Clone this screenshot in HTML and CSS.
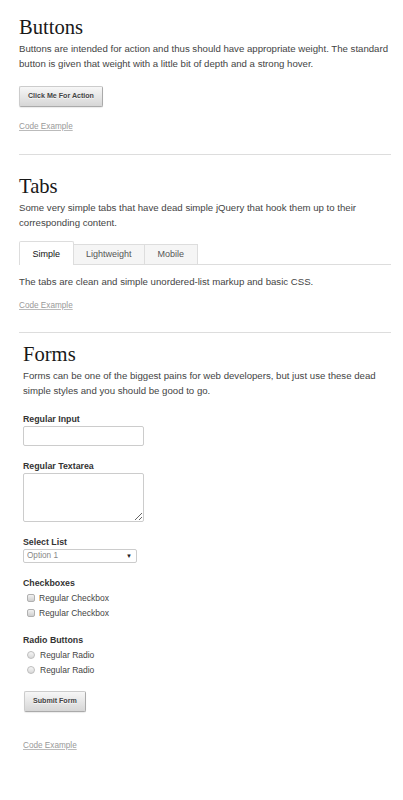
FILE: index.html
```html
<!DOCTYPE html>
<html lang="en">
<head>
<meta charset="utf-8">
<title>Skeleton Docs</title>
<link rel="stylesheet" href="styles.css">
</head>
<body>
<section class="section section-buttons">
  <h2 class="title">Buttons</h2>
  <p class="lead">Buttons are intended for action and thus should have appropriate weight. The standard button is given that weight with a little bit of depth and a strong hover.</p>
  <button class="btn btn-action" type="button">Click Me For Action</button>
  <a class="code-link code-buttons" href="#">Code Example</a>
</section>
<hr class="rule rule-first">
<section class="section section-tabs">
  <h2 class="title">Tabs</h2>
  <p class="lead">Some very simple tabs that have dead simple jQuery that hook them up to their corresponding content.</p>
  <nav class="tabs">
    <a class="tab active" href="#">Simple</a>
    <a class="tab" href="#">Lightweight</a>
    <a class="tab" href="#">Mobile</a>
  </nav>
  <p class="lead tab-content">The tabs are clean and simple unordered-list markup and basic CSS.</p>
  <a class="code-link code-tabs" href="#">Code Example</a>
</section>
<hr class="rule rule-second">
<section class="section section-forms">
  <h2 class="title">Forms</h2>
  <p class="lead">Forms can be one of the biggest pains for web developers, but just use these dead simple styles and you should be good to go.</p>
  <form class="form">
    <div class="field">
      <label class="lbl">Regular Input</label>
      <input class="text-input" type="text">
    </div>
    <div class="field">
      <label class="lbl">Regular Textarea</label>
      <textarea class="text-area"></textarea>
    </div>
    <div class="field">
      <label class="lbl">Select List</label>
      <div class="select">
        <select class="select-box"><option>Option 1</option><option>Option 2</option></select>
      </div>
    </div>
    <div class="field">
      <span class="lbl">Checkboxes</span>
      <label class="check-row"><input class="cb" type="checkbox"><span>Regular Checkbox</span></label>
      <label class="check-row"><input class="cb" type="checkbox"><span>Regular Checkbox</span></label>
    </div>
    <div class="field">
      <span class="lbl">Radio Buttons</span>
      <label class="check-row"><input class="rb" type="radio" name="r"><span>Regular Radio</span></label>
      <label class="check-row"><input class="rb" type="radio" name="r"><span>Regular Radio</span></label>
    </div>
    <button class="btn btn-submit" type="button">Submit Form</button>
  </form>
  <a class="code-link code-forms" href="#">Code Example</a>
</section>
</body>
</html>
```
FILE: styles.css
```css
* { box-sizing: border-box; }

body {
  margin: 0;
  padding: 15px 12px 40px 19px;
  background: #fff;
  color: #444;
  font-family: "Liberation Sans", Arial, sans-serif;
}

.title {
  margin: 0 0 3px;
  font-family: "Liberation Serif", Georgia, serif;
  font-weight: normal;
  font-size: 20.6px;
  line-height: 24px;
  color: #181818;
}

.lead {
  margin: 0;
  font-size: 9.65px;
  line-height: 14.5px;
  color: #444;
}

.btn {
  display: block;
  margin: 0;
  padding: 5px 8px;
  font-family: "Liberation Sans", Arial, sans-serif;
  font-weight: bold;
  font-size: 7.1px;
  line-height: 9px;
  color: #444;
  border: 1px solid #aaa;
  border-top-color: #ccc;
  border-left-color: #ccc;
  border-radius: 2px;
  background: linear-gradient(#f7f7f7, #d6d6d6);
  box-shadow: 0 1px 1px rgba(0, 0, 0, 0.08);
  text-shadow: 0 1px rgba(255, 255, 255, 0.75);
  cursor: pointer;
}

.btn-action { margin-top: 15px; }

.code-link {
  display: block;
  width: fit-content;
  font-size: 8.2px;
  line-height: 10px;
  color: #999;
  text-decoration: underline;
  text-decoration-color: #bbb;
}

.code-buttons { margin-top: 15px; }
.code-tabs { margin-top: 11.5px; }
.code-forms { margin-top: 29px; }

.rule {
  border: 0;
  border-top: 1px solid #ddd;
  height: 0;
}
.rule-first { margin: 22px 0 19px; }
.rule-second { margin: 21px 0 9px; }

/* Tabs */
.tabs {
  display: flex;
  align-items: flex-start;
  margin: 14px 0 10px;
  border-bottom: 1px solid #ddd;
}

.tab {
  height: 20px;
  line-height: 19px;
  padding: 0 12.5px;
  border: 1px solid #ddd;
  border-width: 1px 1px 0 0;
  background: #f5f5f5;
  color: #555;
  font-size: 9px;
  text-decoration: none;
}

.tab:first-child { border-left-width: 1px; }

.tab.active {
  height: 24px;
  margin-top: -3px;
  margin-bottom: -1px;
  padding-top: 3px;
  background: #fff;
  color: #111;
  border-radius: 2px 2px 0 0;
}

.tab-content { margin: 0; }

/* Forms */
.section-forms { padding-left: 4px; }

.form { margin-top: 15px; }

.field { margin-bottom: 14px; }

.lbl {
  display: block;
  margin-bottom: 1px;
  font-weight: bold;
  font-size: 8.8px;
  line-height: 12px;
  color: #333;
}

.text-input {
  display: block;
  width: 121px;
  height: 20px;
  margin: 0;
  border: 1px solid #ccc;
  border-radius: 2px;
  background: #fff;
}

.text-area {
  display: block;
  width: 121px;
  height: 49px;
  margin: 0;
  border: 1px solid #ccc;
  border-radius: 2px;
  background: #fff;
}

.select {
  position: relative;
  width: 114px;
  height: 14px;
}

.select-box {
  appearance: none;
  -webkit-appearance: none;
  display: block;
  width: 100%;
  height: 14px;
  margin: 0;
  padding: 0 0 0 3px;
  border: 1px solid #ccc;
  border-radius: 2px;
  background: #fff;
  font-family: "Liberation Sans", Arial, sans-serif;
  font-size: 8.2px;
  line-height: 12px;
  color: #888;
}

.select::after {
  content: "\25BC";
  position: absolute;
  right: 5px;
  top: 3px;
  font-size: 6px;
  line-height: 8px;
  color: #222;
  pointer-events: none;
}

.check-row {
  display: flex;
  align-items: center;
  height: 15px;
  font-size: 8.5px;
  color: #444;
}

.cb, .rb {
  appearance: none;
  -webkit-appearance: none;
  flex: none;
  width: 8px;
  height: 8px;
  margin: 0 4px 0 4px;
  border: 1px solid #b0b0b0;
  background: linear-gradient(#f2f2f2, #cfcfcf);
}

.cb { border-radius: 2px; }
.rb { border-radius: 50%; margin-right: 5px; background: linear-gradient(#f6f6f6, #d8d8d8); border-color: #bdbdbd; }

.btn-submit { margin-left: 1px; }
```
